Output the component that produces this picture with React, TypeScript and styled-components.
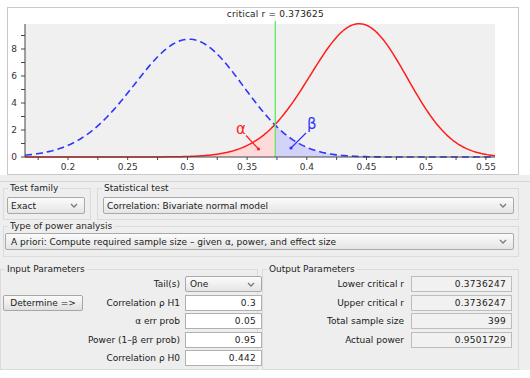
import React from "react";
import styled, { createGlobalStyle } from "styled-components";

const GlobalStyle = createGlobalStyle`
  body {
    margin: 0;
    background: #fff;
    font-family: "DejaVu Sans", "Liberation Sans", sans-serif;
    color: #1e1e1e;
  }
`;

// plot geometry (page pixels)
const RHO1 = 0.3;
const RHO0 = 0.442;
const N = 399;
const RC = 0.373625;
const R_MIN = 0.164;
const R_MAX = 0.5576;
const SE = 1 / Math.sqrt(N - 3);

const px = (r: number) => 68 + (r - 0.2) * 1194;
const py = (d: number) => 157 - d * 13.5;

const dens = (r: number, rho: number) => {
  const z = (Math.atanh(r) - Math.atanh(rho)) / SE;
  return Math.exp((-z * z) / 2) / Math.sqrt(2 * Math.PI) / SE / (1 - r * r);
};

const pts = (rho: number, a: number, b: number, steps = 240) => {
  const out: string[] = [];
  for (let i = 0; i <= steps; i++) {
    const r = a + ((b - a) * i) / steps;
    out.push(`${px(r).toFixed(2)},${py(dens(r, rho)).toFixed(2)}`);
  }
  return out;
};

const Page = styled.div`
  width: 530px;
  height: 378px;
  background: #fff;
`;

const ChartArea = styled.div`
  padding: 7px 0 0 7px;
`;

const ChartPanel = styled.div`
  width: 512px;
  height: 168px;
  box-sizing: border-box;
  border: 1px solid #c9c9c9;
  background: #fff;
  svg {
    display: block;
  }
`;

const Controls = styled.div`
  background: #eeeeee;
  padding: 6px 11px 0 3px;
  height: 195px;
  box-sizing: border-box;
`;

const Separator = styled.div`
  height: 1px;
  background: #d6d6d6;
  margin: 0 -11px 0 -3px;
`;

const Row = styled.div<{ $cols: string; $mt: number; $ml?: number }>`
  display: grid;
  grid-template-columns: ${(p) => p.$cols};
  column-gap: ${(p) => (p.$ml ? 4 : 6)}px;
  margin-top: ${(p) => p.$mt}px;
  margin-left: ${(p) => p.$ml ?? 0}px;
`;

const Group = styled.fieldset<{ $pt: number; $pr: number; $pb: number; $pl: number }>`
  margin: 0;
  min-width: 0;
  border: 1px solid #dbdbdb;
  padding: ${(p) => `${p.$pt}px ${p.$pr}px ${p.$pb}px ${p.$pl}px`};
  > legend {
    margin-left: ${(p) => 4 - p.$pl}px;
  }
`;

const Legend = styled.legend`
  padding: 0 2px;
  font-size: 9px;
  line-height: 11px;
  color: #1e1e1e;
`;

const SelectBox = styled.div<{ $h: number; $pl: number }>`
  height: ${(p) => p.$h}px;
  box-sizing: border-box;
  border: 1px solid #a9a9a9;
  border-radius: 2px;
  background: linear-gradient(#fbfbfb, #e5e5e5);
  display: flex;
  align-items: center;
  justify-content: space-between;
  padding: 0 6px 0 ${(p) => p.$pl}px;
  font-size: 9px;
  color: #1a1a1a;
  white-space: nowrap;
`;

const ParamGrid = styled.div<{ $cols: string; $gap: number }>`
  display: grid;
  grid-template-columns: ${(p) => p.$cols};
  column-gap: ${(p) => p.$gap}px;
  row-gap: 2.5px;
  grid-auto-rows: 16px;
`;

const Label = styled.div<{ $col: number }>`
  grid-column: ${(p) => p.$col};
  display: flex;
  align-items: center;
  justify-content: flex-end;
  font-size: 9px;
  white-space: nowrap;
  color: #1a1a1a;
`;

const Field = styled.div<{ $out?: boolean }>`
  box-sizing: border-box;
  background: ${(p) => (p.$out ? "#f1f1f1" : "#fff")};
  border: 1px solid ${(p) => (p.$out ? "#bdbdbd" : "#b0b0b0")};
  display: flex;
  align-items: center;
  justify-content: flex-end;
  padding-right: 5px;
  font-size: 9px;
  letter-spacing: 0.3px;
  color: #1a1a1a;
`;

const Button = styled.div`
  grid-column: 1;
  box-sizing: border-box;
  border: 1px solid #a6a6a6;
  border-radius: 2px;
  background: linear-gradient(#fafafa, #e1e1e1);
  display: flex;
  align-items: center;
  justify-content: center;
  font-size: 9px;
  color: #1a1a1a;
  white-space: nowrap;
`;

const Chevron = () => (
  <svg width="8" height="5" viewBox="0 0 8 5">
    <polyline points="1,1 4,4 7,1" fill="none" stroke="#7a7a7a" strokeWidth="1.3" />
  </svg>
);

const Select = ({ text, h = 17, pl = 3 }: { text: string; h?: number; pl?: number }) => (
  <SelectBox $h={h} $pl={pl}>
    <span>{text}</span>
    <Chevron />
  </SelectBox>
);

const Chart = () => {
  const blue = pts(RHO1, R_MIN, R_MAX);
  const red = pts(RHO0, R_MIN, R_MAX);
  const alpha = pts(RHO0, R_MIN, RC, 120);
  const beta = pts(RHO1, RC, R_MAX, 120);
  const xc = px(RC);

  const yTicks = Array.from({ length: 10 }, (_, i) => i);
  const xTicks = Array.from({ length: 16 }, (_, i) => 0.175 + i * 0.025);
  const xLabels = [0.2, 0.25, 0.3, 0.35, 0.4, 0.45, 0.5, 0.55];

  return (
    <svg width="510" height="166" viewBox="8 8 510 166" fontFamily="DejaVu Sans, sans-serif">
      <rect x="25" y="24" width="470" height="133" fill="#f0f0f0" />
      <path d={`M${px(R_MIN)},157 L${alpha.join(" L")} L${xc},157 Z`} fill="#ffdada" />
      <path d={`M${xc},157 L${beta.join(" L")} L${px(R_MAX)},157 Z`} fill="#d3d3fa" />
      <polyline points={red.join(" ")} fill="none" stroke="#ff1c1c" strokeWidth="1.5" />
      <polyline
        points={blue.join(" ")}
        fill="none"
        stroke="#2f35ff"
        strokeWidth="1.6"
        strokeDasharray="7 4"
      />
      <line x1={xc} y1="21" x2={xc} y2="157" stroke="#5fea5f" strokeWidth="1.3" />
      <text x={xc} y="16.5" fontSize="9" textAnchor="middle" fill="#222" letterSpacing="0.2">
        critical r = 0.373625
      </text>

      <line x1="25" y1="24" x2="25" y2="157" stroke="#444" strokeWidth="1" />
      <line x1="25" y1="157" x2="495" y2="157" stroke="#444" strokeWidth="1" />
      {yTicks.map((v) => (
        <line key={v} x1="21" y1={py(v)} x2="25" y2={py(v)} stroke="#444" strokeWidth="1" />
      ))}
      {[0, 2, 4, 6, 8].map((v) => (
        <text key={v} x="17" y={py(v) + 3} fontSize="9" textAnchor="end" fill="#333">
          {v}
        </text>
      ))}
      {xTicks.map((v) => (
        <line key={v} x1={px(v)} y1="157" x2={px(v)} y2="160" stroke="#444" strokeWidth="1" />
      ))}
      {xLabels.map((v) => (
        <text key={v} x={px(v)} y="170" fontSize="9" textAnchor="middle" fill="#333">
          {String(v)}
        </text>
      ))}

      <text x="236" y="134" fontSize="15" fill="#ff1c1c">
        α
      </text>
      <line x1="246" y1="135.5" x2="258.5" y2="149" stroke="#ff1c1c" strokeWidth="1.2" />
      <circle cx="258.5" cy="149" r="1.6" fill="#ff1c1c" />

      <text x="307" y="129" fontSize="15" fill="#2f35ff">
        β
      </text>
      <line x1="306" y1="133" x2="291" y2="148" stroke="#2f35ff" strokeWidth="1.2" />
      <circle cx="291" cy="148" r="1.6" fill="#2f35ff" />
    </svg>
  );
};

const inputs: [string, string][] = [
  ["Correlation ρ H1", "0.3"],
  ["α err prob", "0.05"],
  ["Power (1–β err prob)", "0.95"],
  ["Correlation ρ H0", "0.442"],
];

const outputs: [string, string][] = [
  ["Lower critical r", "0.3736247"],
  ["Upper critical r", "0.3736247"],
  ["Total sample size", "399"],
  ["Actual power", "0.9501729"],
];

export default function App() {
  return (
    <Page>
      <GlobalStyle />
      <ChartArea>
        <ChartPanel>
          <Chart />
        </ChartPanel>
      </ChartArea>
      <Controls>
        <Separator />
        <Row $cols="88px 1fr" $mt={1}>
          <Group $pt={3} $pr={5} $pb={5} $pl={3}>
            <Legend>Test family</Legend>
            <Select text="Exact" />
          </Group>
          <Group $pt={3} $pr={4} $pb={5} $pl={5}>
            <Legend>Statistical test</Legend>
            <Select text="Correlation: Bivariate normal model" />
          </Group>
        </Row>
        <Row $cols="1fr" $mt={1}>
          <Group $pt={1} $pr={4} $pb={6} $pl={1}>
            <Legend>Type of power analysis</Legend>
            <Select text="A priori: Compute required sample size – given α, power, and effect size" pl={5} />
          </Group>
        </Row>
        <Row $cols="258px 1fr" $mt={7} $ml={-3}>
          <Group $pt={1} $pr={8} $pb={3} $pl={2}>
            <Legend>Input Parameters</Legend>
            <ParamGrid $cols="80px 1fr 77px" $gap={5}>
              <Label $col={2}>Tail(s)</Label>
              <Select text="One" h={16} pl={4} />
              {inputs.map(([label, value], i) => (
                <React.Fragment key={label}>
                  {i === 0 && <Button>Determine =&gt;</Button>}
                  <Label $col={2}>{label}</Label>
                  <Field>{value}</Field>
                </React.Fragment>
              ))}
            </ParamGrid>
          </Group>
          <Group $pt={1} $pr={6} $pb={3} $pl={4}>
            <Legend>Output Parameters</Legend>
            <ParamGrid $cols="1fr 101px" $gap={7}>
              {outputs.map(([label, value]) => (
                <React.Fragment key={label}>
                  <Label $col={1}>{label}</Label>
                  <Field $out>{value}</Field>
                </React.Fragment>
              ))}
            </ParamGrid>
          </Group>
        </Row>
      </Controls>
    </Page>
  );
}
